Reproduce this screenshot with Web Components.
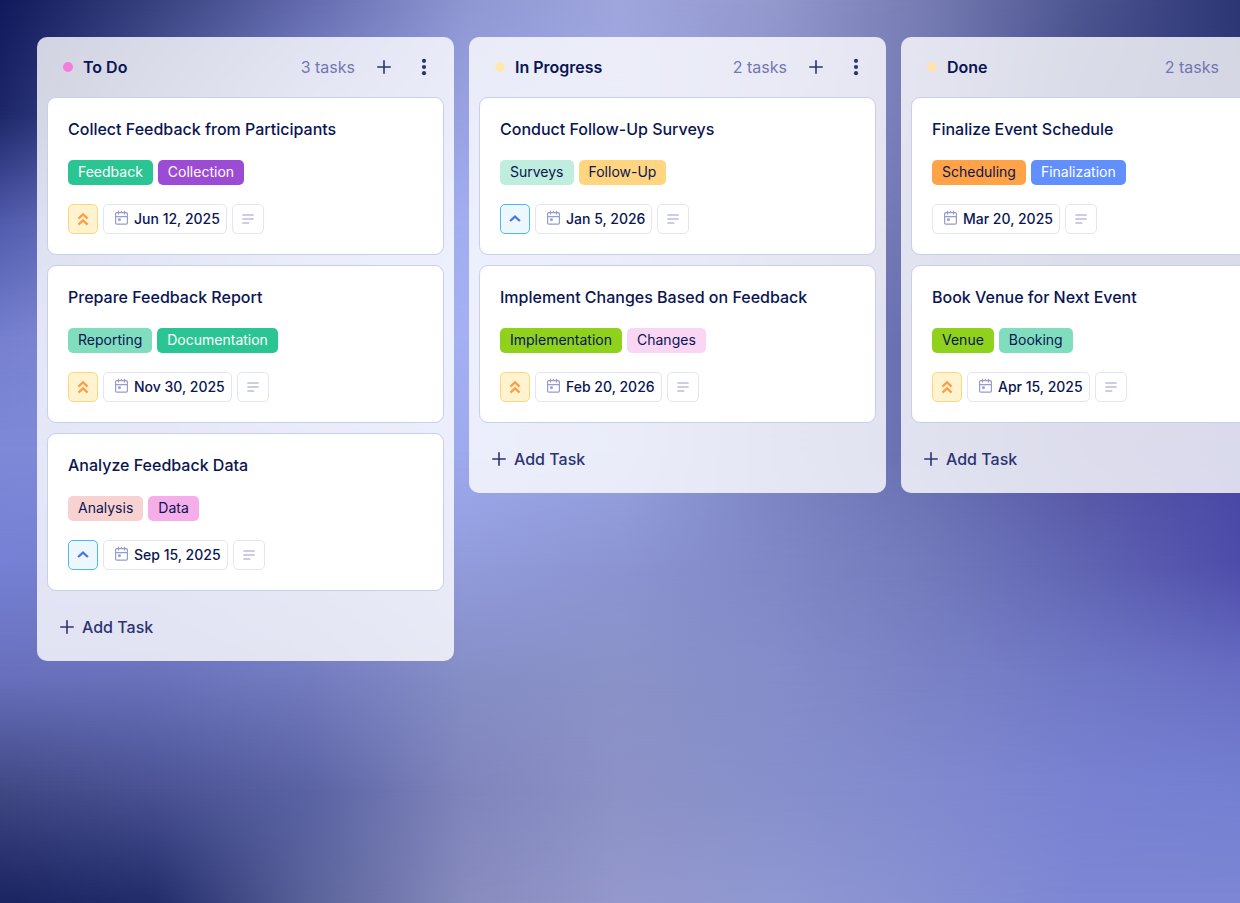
<!DOCTYPE html>
<html lang="en">
<head>
<meta charset="utf-8">
<meta name="viewport" content="width=device-width, initial-scale=1">
<title>Event Feedback Board</title>
<style>
html, body { margin: 0; min-height: 100%; }
body { font-family: Inter, "Liberation Sans", sans-serif; color: #0a1551; overflow-x: hidden; background: #8088c8; }
</style>
</head>
<body>
<task-board>
  <task-column name="To Do" count="3 tasks" dot="#f07fdc">
    <task-card name="Collect Feedback from Participants" priority="high" date="Jun 12, 2025">
      <task-tag tone="green">Feedback</task-tag><task-tag tone="purple">Collection</task-tag>
    </task-card>
    <task-card name="Prepare Feedback Report" priority="high" date="Nov 30, 2025">
      <task-tag tone="mint">Reporting</task-tag><task-tag tone="green">Documentation</task-tag>
    </task-card>
    <task-card name="Analyze Feedback Data" priority="medium" date="Sep 15, 2025">
      <task-tag tone="rose">Analysis</task-tag><task-tag tone="pink">Data</task-tag>
    </task-card>
  </task-column>
  <task-column name="In Progress" count="2 tasks" dot="#ffe8b0">
    <task-card name="Conduct Follow-Up Surveys" priority="medium" date="Jan 5, 2026">
      <task-tag tone="aqua">Surveys</task-tag><task-tag tone="yellow">Follow-Up</task-tag>
    </task-card>
    <task-card name="Implement Changes Based on Feedback" priority="high" date="Feb 20, 2026">
      <task-tag tone="lime">Implementation</task-tag><task-tag tone="blush">Changes</task-tag>
    </task-card>
  </task-column>
  <task-column name="Done" count="2 tasks" dot="#ffe2b4">
    <task-card name="Finalize Event Schedule" date="Mar 20, 2025">
      <task-tag tone="orange">Scheduling</task-tag><task-tag tone="blue">Finalization</task-tag>
    </task-card>
    <task-card name="Book Venue for Next Event" priority="high" date="Apr 15, 2025">
      <task-tag tone="lime">Venue</task-tag><task-tag tone="mint">Booking</task-tag>
    </task-card>
  </task-column>
</task-board>

<script>
const withShadow = (el, html) => {
  const t = document.createElement('template');
  t.innerHTML = html;
  el.attachShadow({ mode: 'open' }).append(t.content.cloneNode(true));
};

/* Mesh backdrop: each row is a horizontal gradient, faded into the next one. */
const MESH = [
  ['#101a5c','#38427f','#646cb0','#8f97d2','#9fa6de','#9399cc','#757bb2','#4d5590','#2c3674'],
  ['#1c2668','#4f5a9f','#8089cb','#98a2e2','#a0a8e4','#8d93cc','#7479b4','#414a8a','#2f3878'],
  ['#525cae','#7882c8','#98a3e6','#a2aef0','#9ca5e4','#858bc6','#6e74b0','#535994','#484f8e'],
  ['#7680cf','#8590dc','#9aa6ea','#a4b0f2','#96a0e2','#7b82c0','#666dac','#54589c','#4a4c98'],
  ['#7e89d8','#808bda','#929de4','#9eaaee','#97a2e2','#7c84c4','#676eb0','#5353a2','#4846a4'],
  ['#7680d4','#7681d0','#848dd0','#929cdc','#8c95d2','#8088c6','#727abc','#6064b2','#4e4caa'],
  ['#6870bc','#6a72bb','#747cc0','#858ec6','#8a92c8','#858dca','#7a82c6','#7078c6','#696fc4'],
  ['#404884','#4a5294','#5a63a4','#8085bc','#8c92c6','#8790cc','#818acf','#7982d2','#7480d2'],
  ['#1a2460','#222c6a','#5a639a','#878bbd','#9498cc','#9098d2','#8790d2','#7d86d4','#7c86d4']
];

customElements.define('mesh-backdrop', class extends HTMLElement {
  constructor() {
    super();
    const step = 100 / (MESH.length - 1);
    const rows = MESH.map((row, i) => {
      const mask = i ? `mask-image:linear-gradient(to bottom, transparent ${(i - 1) * step}%, #000 ${i * step}%)` : '';
      return `<i style="background:linear-gradient(to right, ${row.join()});${mask}"></i>`;
    }).join('');
    withShadow(this, `<style>
      :host { position: absolute; inset: 0; z-index: -1; overflow: hidden; }
      i { position: absolute; inset: 0; }
    </style>${rows}`);
  }
});

customElements.define('task-board', class extends HTMLElement {
  constructor() {
    super();
    withShadow(this, `<style>
      :host { display: flex; align-items: flex-start; gap: 15px; box-sizing: border-box; min-height: 100vh; padding: 37px; position: relative; z-index: 0; overflow: hidden; }
    </style><mesh-backdrop></mesh-backdrop><slot></slot>`);
  }
});

const PLUS = '<svg width="16" height="16" viewBox="0 0 16 16" fill="none" stroke="currentColor" stroke-width="1.6" stroke-linecap="round" aria-hidden="true"><path d="M8 1.8v12.4M1.8 8h12.4"/></svg>';

customElements.define('task-column', class extends HTMLElement {
  constructor() {
    super();
    const a = n => this.getAttribute(n);
    withShadow(this, `<style>
      :host { display: block; box-sizing: border-box; flex: 0 0 417px; padding: 0 10px 14px; border-radius: 10px; background: rgba(255,255,255,.8); }
      header { display: flex; align-items: center; height: 60px; padding: 0 8px 0 16px; }
      .dot { width: 10px; height: 10px; margin-right: 10px; border-radius: 50%; background: ${a('dot')}; }
      h2 { flex: 1; margin: 0; font-size: 16px; line-height: 24px; font-weight: 600; }
      .count { font-size: 16px; line-height: 24px; color: #7376b2; margin-right: 17px; }
      button { display: flex; align-items: center; justify-content: center; padding: 0; border: 0; background: none; font: inherit; color: #2c3472; cursor: pointer; }
      header button { width: 24px; height: 24px; }
      header button + button { margin-left: 16px; }
      .cards { display: flex; flex-direction: column; gap: 10px; }
      .add { gap: 7px; height: 40px; margin-top: 16px; padding: 0 12px; font-size: 16px; line-height: 24px; font-weight: 500; }
    </style>
    <header>
      <span class="dot"></span><h2>${a('name')}</h2><span class="count">${a('count')}</span>
      <button type="button" aria-label="Add task">${PLUS}</button>
      <button type="button" aria-label="Column menu"><svg width="6" height="18" viewBox="0 0 6 18" fill="currentColor" aria-hidden="true"><circle cx="3" cy="2.8" r="2.1"/><circle cx="3" cy="9" r="2.1"/><circle cx="3" cy="15.2" r="2.1"/></svg></button>
    </header>
    <div class="cards"><slot></slot></div>
    <button type="button" class="add">${PLUS}<span>Add Task</span></button>`);
  }
});

const PRIORITY = {
  high: '<path d="M2.4 6.6 7 2.4l4.6 4.2M2.4 12.6 7 8.4l4.6 4.2"/>',
  medium: '<path d="M2.1 9 7 4.6 11.9 9"/>'
};

customElements.define('task-card', class extends HTMLElement {
  constructor() {
    super();
    const a = n => this.getAttribute(n);
    const p = a('priority');
    withShadow(this, `<style>
      :host { display: block; box-sizing: border-box; padding: 19px 20px 20px; border: 1px solid #c8ceed; border-radius: 9px; background: #fff; }
      h3 { margin: 0; font-size: 16px; line-height: 24px; font-weight: 500; }
      .tags { display: flex; gap: 5px; margin: 19px 0; }
      .meta { display: flex; gap: 5px; }
      button { display: flex; align-items: center; justify-content: center; box-sizing: border-box; height: 30px; padding: 0; border: 1px solid #e3e5f5; border-radius: 5px; background: #fff; font: inherit; color: inherit; cursor: pointer; }
      .high { width: 30px; border-color: #ffd67d; background: #fff3d0; color: #ff9f45; }
      .medium { width: 30px; border-color: #4db7f9; background: #edf7ff; color: #4f74ea; }
      .date { gap: 5px; padding: 0 6px 0 10px; font-size: 14px; line-height: 20px; font-weight: 500; }
      .date svg { margin-bottom: 2px; }
      .note { width: 32px; }
      .date svg, .note { color: #979bcd; }
    </style>
    <h3>${a('name')}</h3>
    <div class="tags"><slot></slot></div>
    <div class="meta">
      ${p ? `<button type="button" class="${p}" aria-label="${p} priority"><svg width="14" height="15" viewBox="0 0 14 15" fill="none" stroke="currentColor" stroke-width="2.3" aria-hidden="true">${PRIORITY[p]}</svg></button>` : ''}
      <button type="button" class="date"><svg width="15" height="16" viewBox="0 0 15 16" fill="none" stroke="currentColor" stroke-width="1.2" aria-hidden="true"><rect x="1.6" y="2.6" width="11.8" height="11.6" rx="1.2"/><path d="M1.6 6.6h11.8M4.5.8v3.6M7.5.8v1.8M10.5.8v3.6"/><rect x="4" y="8.4" width="2.8" height="2.4" fill="currentColor" stroke="none"/></svg><span>${a('date')}</span></button>
      <button type="button" class="note" aria-label="Description"><svg width="12" height="12" viewBox="0 0 12 12" fill="none" stroke="currentColor" stroke-width="1.2" stroke-linecap="round" aria-hidden="true"><path d="M.8 2h10.4M.8 6h10.4M.8 10h6"/></svg></button>
    </div>`);
  }
});

customElements.define('task-tag', class extends HTMLElement {
  constructor() {
    super();
    withShadow(this, `<style>
      :host { display: block; padding: 0 10px 1px; border-radius: 5px; font-size: 14px; line-height: 24px; white-space: nowrap; }
      :host([tone=green]) { background: #2bc594; color: #fff; }
      :host([tone=purple]) { background: #9c4bd4; color: #fff; }
      :host([tone=mint]) { background: #80debf; }
      :host([tone=rose]) { background: #f8d2d1; }
      :host([tone=pink]) { background: #f5aeea; }
      :host([tone=aqua]) { background: #bfeedf; }
      :host([tone=yellow]) { background: #ffd580; }
      :host([tone=lime]) { background: #8fd11b; }
      :host([tone=blush]) { background: #fad6f5; }
      :host([tone=orange]) { background: #ffa346; }
      :host([tone=blue]) { background: #6190fe; color: #fff; }
    </style><slot></slot>`);
  }
});
</script>
</body>
</html>
